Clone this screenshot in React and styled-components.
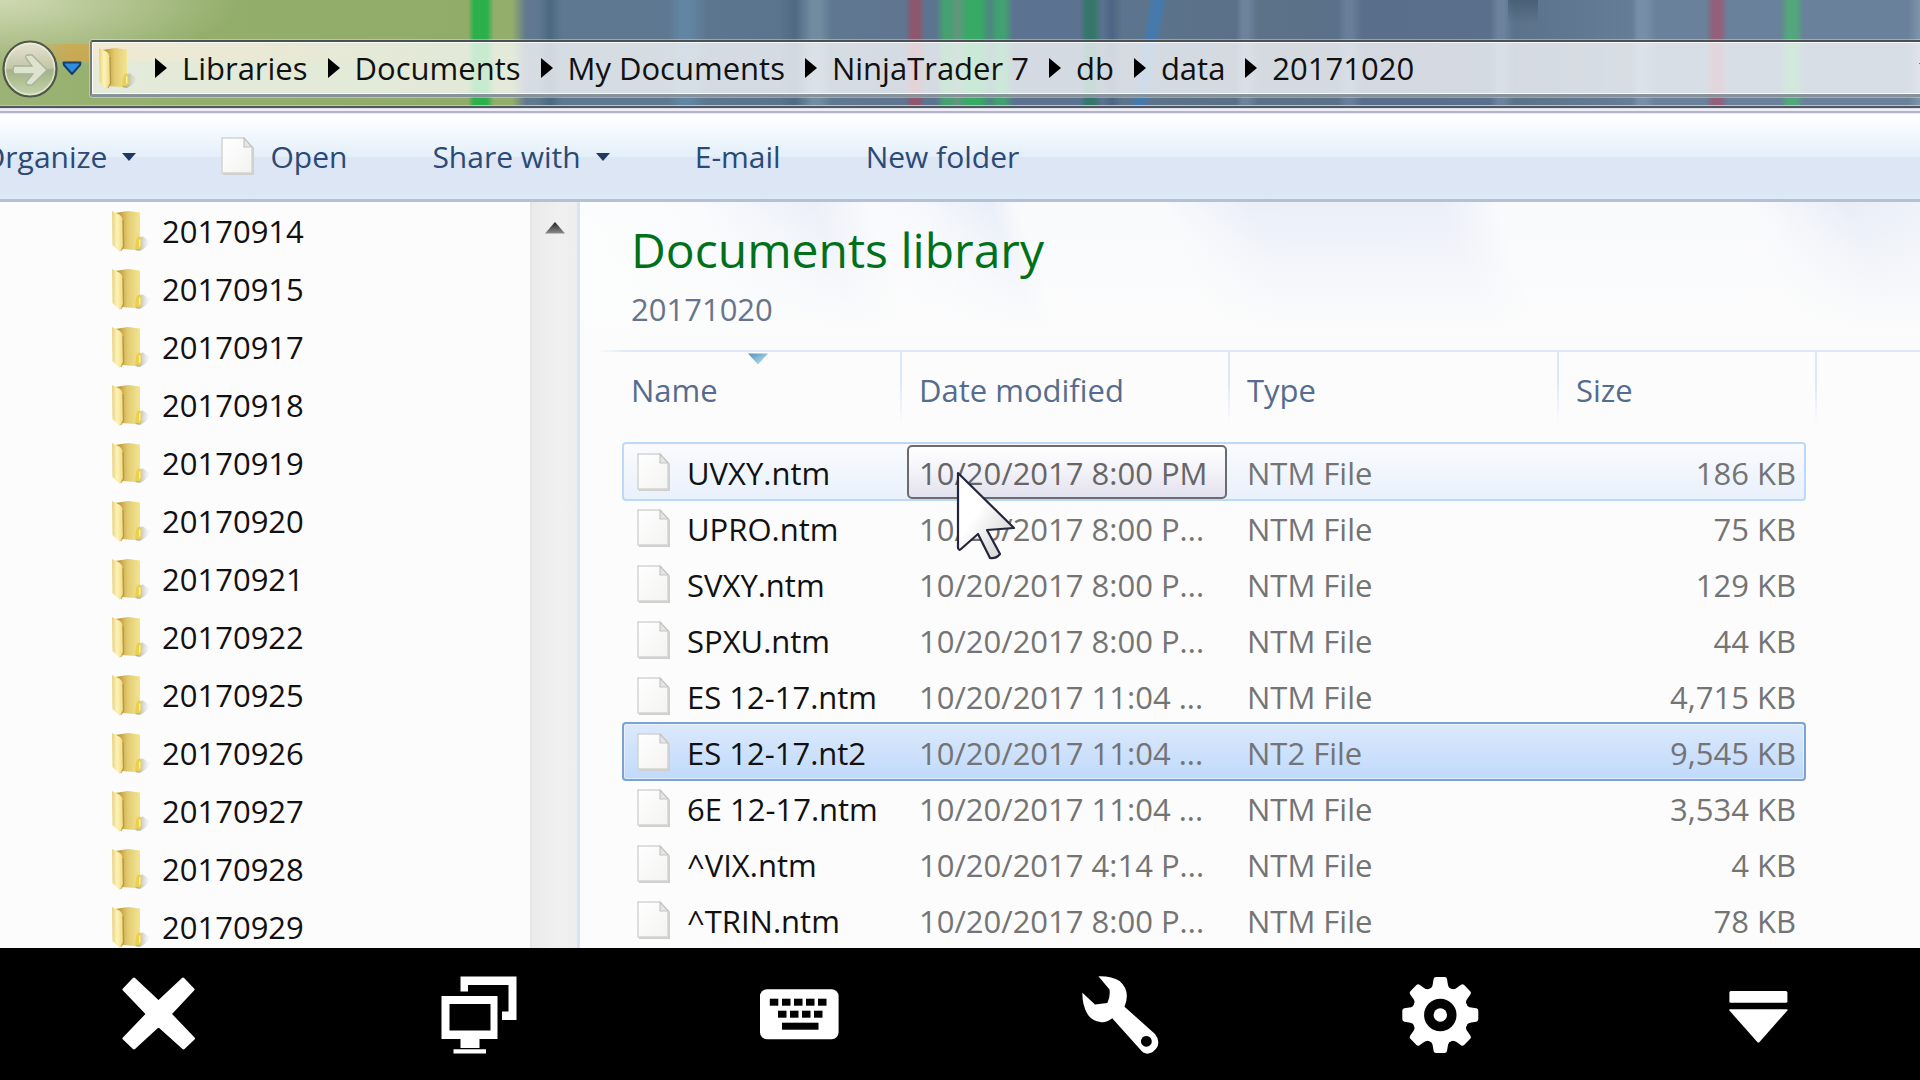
import React from "react";
import styled, { createGlobalStyle } from "styled-components";

const GlobalStyle = createGlobalStyle`
  * { box-sizing: border-box; }
  body { margin: 0; background: #000; }
  button, a { font: inherit; color: inherit; text-decoration: none; }
  button { border: 0; padding: 0; background: none; cursor: default; }
  ul, ol { list-style: none; margin: 0; padding: 0; }
  svg { display: block; flex: none; }
`;

const Screen = styled.div`
  height: 100vh;
  display: flex;
  flex-direction: column;
  overflow: hidden;
  font-family: "Open Sans", "Noto Sans", sans-serif;
  font-size: 31px;
  line-height: 44px;
  white-space: nowrap;
  color: #111;
`;

/* Title bar */

const TitleBar = styled.header`
  flex: none;
  display: flex;
  align-items: center;
  height: 105px;
  padding: 40px 0 8px 2px;
  background:
    linear-gradient(90deg, transparent 30px, rgba(214, 165, 70, 0.75) 70px, rgba(214, 165, 70, 0.5) 180px, transparent 440px) 0 44px / 440px 18px no-repeat,
    radial-gradient(ellipse 240px 70px at 0 0, rgba(225, 229, 200, 0.75), transparent) no-repeat,
    linear-gradient(rgba(60, 85, 105, 0.6), transparent) 1508px 0 / 30px 24px no-repeat,
    linear-gradient(100deg, transparent 38%, rgba(62, 124, 182, 0.75) 46% 56%, transparent 64%) 1120px 0 / 56px 105px no-repeat,
    linear-gradient(90deg,
      #9bb374 0, #93ae6b 200px, #91ab68 468px, #2bb04c 474px 487px, #93ae6b 494px 512px,
      #61788f 526px, #5f7891 538px, #4b6881 550px, #5f7891 562px, #5f7891 668px,
      #6185a3 680px 690px, #5d7690 706px, #5b748e 780px, #506a84 795px, #718ba1 812px 820px,
      #5f7891 832px, #5f7590 905px, #8f566d 912px 918px, #5b7590 926px, #5b7590 936px,
      #46a071 944px 950px, #659480 957px, #37aa65 968px 980px, #4e8580 990px, #40a270 998px 1004px,
      #5b7290 1014px, #5b7290 1080px, #35776a 1086px 1094px, #5b7290 1102px, #4d6584 1112px,
      #5d748d 1122px, #5a7089 1236px, #6c839b 1242px 1248px, #5b7287 1258px, #5a718a 1338px,
      #687f9a 1346px 1352px, #586e8b 1362px, #596f8b 1490px, #6c839d 1498px 1504px, #5b728b 1514px,
      #657d96 1632px, #768ea8 1638px 1646px, #69819a 1656px, #69819a 1706px, #935f7b 1713px 1720px,
      #69819a 1728px, #69819a 1780px, #52a77c 1788px 1796px, #69819a 1804px, #69819a 1908px, #7e95ab 1920px);
`;

const ForwardButton = styled.button`
  width: 56px;
  height: 58px;
  margin-right: 4px;
`;

const HistoryButton = styled.button`
  margin-right: 8px;
`;

const AddressBar = styled.nav`
  flex: 1;
  display: flex;
  align-items: center;
  height: 57px;
  padding-left: 6px;
  border: 2px solid #4b5052;
  border-bottom: 3px solid #87929a;
  border-right: 0;
  border-left-color: #777d70;
  border-radius: 3px 0 0 3px;
  background: rgba(255, 255, 255, 0.74);
  box-shadow: inset 1px 1px 0 rgba(255, 255, 255, 0.8), inset 0 -1px 0 rgba(255, 255, 255, 0.8), 0 0 0 1px rgba(255, 255, 255, 0.35);
  overflow: hidden;
`;

const Crumbs = styled.ol`
  flex: 1;
  display: flex;
  padding-left: 18px;
`;

const Crumb = styled.li`
  display: flex;
  align-items: center;
  gap: 15px;
  margin-right: 20px;
`;

const CrumbArrow = styled.span`
  border: 10px solid transparent;
  border-left: 12px solid #000;
  border-right: 0;
`;

const AddressToggle = styled.button`
  margin-right: -16px;
`;

const FrameEdge = styled.div`
  flex: none;
  height: 9px;
  background: linear-gradient(#b9c4c4 0 1px, #50575f 1px 3px, #dcdfe9 3px 4px, #efeef7 4px 6px, #b3b3ce 6px 8px, #e7ebf5 8px 9px);
`;

/* Command bar */

const CommandBar = styled.div`
  flex: none;
  display: flex;
  align-items: center;
  gap: 85px;
  height: 88px;
  border-bottom: 3px solid #b3c1d6;
  background: linear-gradient(#fff 0, #f2f8fd 20px, #e4effa 43px, #dce6f4 43px, #dce7f5 80px, #dfe9f6 100%);
  font-size: 30px;
  color: #2b4a76;
`;

const Command = styled.button`
  display: flex;
  align-items: center;
  gap: 15px;
  margin-left: ${(p) => (p.$cut ? "-18px" : "0")};
`;

const Caret = styled.span`
  border: 7px solid transparent;
  border-top: 8px solid #1e3a63;
  border-bottom: 0;
`;

/* Panes */

const Panes = styled.div`
  flex: 1;
  min-height: 0;
  display: flex;
  background: #fcfcfc;
`;

const Sidebar = styled.aside`
  flex: none;
  width: 580px;
  display: flex;
  border-right: 3px solid #d5e5f5;
  overflow: hidden;
`;

const FolderTree = styled.ul`
  flex: 1;
`;

const FolderLink = styled.a`
  display: flex;
  align-items: center;
  gap: 12px;
  height: 58px;
  padding-left: 111px;
`;

const ScrollTrack = styled.div`
  flex: none;
  width: 47px;
  border-left: 2px solid #e6e6e6;
  background: linear-gradient(90deg, #ebebeb, #f0f0f0 60%, #eeeeee);
`;

const ScrollUp = styled.button`
  display: flex;
  justify-content: center;
  width: 100%;
  padding-top: 20px;
`;

const Main = styled.main`
  flex: 1;
  min-width: 0;
  overflow: hidden;
`;

const LibraryHeader = styled.div`
  height: 148px;
  padding: 14px 0 0 51px;
  background:
    linear-gradient(rgba(252, 252, 252, 0), #fcfcfc 90%),
    linear-gradient(70deg, #fcfdfd 0, #f9fbfd 160px, #ebf0f8 270px, #f9fafc 320px, #f6f8fc 370px, #e9eff8 435px, #f9fafc 460px, #f8fafc 600px, #eaeff8 680px, #ebeff8 860px, #f8fafc 910px, #f9fafc 1150px, #e9eef7 1240px, #eef2f9 100%);
`;

const LibraryTitle = styled.h1`
  margin: 0 0 3px;
  font-size: 48px;
  line-height: 68px;
  font-weight: 400;
  color: #00701a;
`;

const LibraryPath = styled.p`
  margin: 0;
  color: #68748c;
`;

const FileTable = styled.table`
  display: block;
`;

const Head = styled.thead`
  display: block;
  padding: 0 0 14px 42px;
  border-top: 2px solid #dde9f6;
  border-image: linear-gradient(90deg, transparent 16px, #dde9f6 50px) 1;
`;

const Body = styled.tbody`
  display: block;
  padding-left: 42px;
`;

const HeadRow = styled.tr`
  display: grid;
  grid-template-columns: 280px 328px 329px 258px;
`;

const HeadCell = styled.th`
  position: relative;
  height: 76px;
  padding: 0 0 0 ${(p) => (p.$first ? "9px" : "17px")};
  line-height: 76px;
  text-align: left;
  font-weight: 400;
  color: #566c8e;
  background: linear-gradient(#dce8f6, #dce8f6 40%, transparent 95%) right / 2px 100% no-repeat;
`;

const SortMark = styled.svg`
  position: absolute;
  top: 1px;
  left: calc(50% - 14px);
`;

const rowLook = {
  hover: "border-color: #bcd9f8; background: linear-gradient(#fafbfd, #e9f1fc);",
  selected: "border-color: #7da2ce; background: linear-gradient(#dce9fb, #c0dafb); box-shadow: inset 0 0 0 1px rgba(255,255,255,0.45);",
};

const Row = styled.tr`
  display: grid;
  grid-template-columns: 277px 328px 329px 1fr;
  width: 1184px;
  height: 59px;
  margin-bottom: -3px;
  border: 2px solid transparent;
  border-radius: 4px;
  ${(p) => rowLook[p.$look] || ""}
`;

const Cell = styled.td`
  display: flex;
  align-items: center;
  padding: 2px 0 0 18px;
  color: #747474;
`;

const NameCell = styled(Cell)`
  gap: 16px;
  padding-left: 13px;
  color: #111;
`;

const SizeCell = styled(Cell)`
  justify-content: flex-end;
  padding: 2px 8px 0 0;
`;

const TipCell = styled(Cell)`
  position: relative;
  padding: 0 2px 0 6px;
`;

const DateTip = styled.span`
  flex: 1;
  display: flex;
  align-items: center;
  height: 54px;
  padding: 2px 0 0 10px;
  border: 2px solid #6c6c6e;
  border-radius: 5px;
  background: linear-gradient(#fff, #f3f2f8 50%, #e2e1ee);
  color: #666;
`;

const Pointer = styled.svg`
  position: absolute;
  z-index: 1;
  top: 25px;
  left: 54px;
`;

/* Remote-session bar */

const SessionBar = styled.footer`
  flex: none;
  display: grid;
  grid-template-columns: repeat(6, 1fr);
  height: 132px;
  background: #000;
`;

const SessionButton = styled.button`
  display: flex;
  align-items: center;
  justify-content: center;
`;

function FolderIcon() {
  return (
    <svg width="39" height="43" viewBox="0 0 39 43" aria-hidden="true">
      <defs>
        <linearGradient id="folderBack" x1="0" x2="1">
          <stop offset="0.2" stopColor="#c4a040" />
          <stop offset="0.5" stopColor="#e2ca70" />
          <stop offset="1" stopColor="#f3e592" />
        </linearGradient>
        <linearGradient id="folderFront" x1="0" x2="1">
          <stop offset="0" stopColor="#e9d07c" />
          <stop offset="0.45" stopColor="#fdf3b8" />
          <stop offset="1" stopColor="#f0dc86" />
        </linearGradient>
        <linearGradient id="folderShade" x1="0" x2="1">
          <stop offset="0" stopColor="#77776c" stopOpacity="0.8" />
          <stop offset="1" stopColor="#b5b5b0" stopOpacity="0" />
        </linearGradient>
      </defs>
      <path d="M24 40 L31 26 L39 31 Q37 37 29 41 Z" fill="url(#folderShade)" />
      <path d="M4 3 L17 1 L29 2.500 V37 L24 40 L10 39 Z" fill="url(#folderBack)" />
      <path d="M25 31 Q26 25 30 27 L31 36 Q30 40 24 39 Z" fill="#ead04e" />
      <path d="M28 30 L29.500 29 V36 L28 37 Z" fill="#f8efa6" />
      <path d="M1 1 L9 5 Q11.500 7 11.500 10 L12 37 L9 42 L1.500 35 Z" fill="url(#folderFront)" />
      <path d="M12 10 L12.500 36 L10 41" fill="none" stroke="#a5873a" strokeOpacity="0.6" strokeWidth="1.400" />
    </svg>
  );
}

function PageIcon() {
  return (
    <svg width="34" height="39" viewBox="0 0 34 39" aria-hidden="true">
      <defs>
        <linearGradient id="page" x1="0" y1="0" x2="1" y2="1">
          <stop offset="0" stopColor="#fff" />
          <stop offset="1" stopColor="#f3f3f2" />
        </linearGradient>
      </defs>
      <path d="M2 2 H24 L33 11 V38 H2 Z" fill="#cfcfcd" />
      <path d="M1 1 H23 L31 10 V36 H1 Z" fill="url(#page)" stroke="#d3d3d1" strokeWidth="1.500" />
      <path d="M23 1 V10 H31 Z" fill="#e6e6e4" stroke="#c4c4c2" strokeWidth="1.200" />
    </svg>
  );
}

const glyphs = {
  Close: (
    <path d="M13 4 L37.500 27 L62 4 L72 14.500 L49 39 L72.500 63.500 L62.500 73 L37.500 50.500 L13 73 L3 63.500 L26.500 39 L3 14.500 Z" strokeWidth="3" strokeLinejoin="round" />
  ),
  Monitors: (
    <g stroke="none">
      <path d="M19.500 1.500 H75.500 V45 H61 V36.500 H67.500 V10 H27 V16.500 H19.500 Z" />
      <path fillRule="evenodd" d="M0.500 21 H56.500 V64 H38.500 V73 H19.500 V64 H0.500 Z M8.500 29 V55.500 H49.500 V29 Z" />
      <path d="M12.500 74.300 H45 V78.500 H12.500 Z" />
    </g>
  ),
  Keyboard: (
    <g stroke="none">
      <rect x="-1" y="14.300" width="78.600" height="50" rx="7" />
      <g fill="#000">
        {[8.800, 21, 33, 45, 57].map((x) => <rect key={x} x={x} y="23.700" width="8.500" height="7" />)}
        {[17, 29, 41, 53].map((x) => <rect key={x} x={x} y="35.700" width="8.500" height="7" />)}
        <rect x="21" y="47.700" width="36.500" height="7" />
      </g>
    </g>
  ),
  Tools: (
    <path fillRule="evenodd" stroke="none" d="M17.400 1.300 Q31 1 38.600 6 Q50 16 43.500 31.700 L74 59 Q79 65 76.500 71.500 Q73 78 66.300 78.700 Q62 78.500 59 74.300 L31.200 43.300 Q25 48 19.400 47 Q10 45.500 6 38.300 Q1 29 1.400 17.700 L14 29.600 L26.300 28 Q29.500 22 28.500 14.500 Z M65.300 61 A5.400 5.400 0 1 0 65.400 61 Z" />
  ),
  Settings: (
    <g stroke="none">
      <circle cx="39.300" cy="40" r="28.500" />
      {[0, 45, 90, 135, 180, 225, 270, 315].map((a) => (
        <path key={a} transform={`rotate(${a} 39.300 40)`} d="M27 15 Q31.500 13 31.800 9 L32.600 4 Q33 2 35 2 H43.600 Q45.600 2 46 4 L46.800 9 Q47.100 13 51.600 15 Z" />
      ))}
      <circle cx="39.300" cy="40" r="16.200" fill="#000" />
      <circle cx="39.300" cy="40" r="6.700" />
    </g>
  ),
  Hide: (
    <g stroke="none">
      <rect x="8.400" y="16" width="58" height="11.800" rx="1.500" />
      <path d="M8.400 34.300 H66.400 V35.500 L38.500 67 Q37.400 68 36.300 67 L8.400 35.500 Z" />
    </g>
  ),
};

const crumbs = ["Libraries", "Documents", "My Documents", "NinjaTrader 7", "db", "data", "20171020"];
const folders = ["20170914", "20170915", "20170917", "20170918", "20170919", "20170920", "20170921", "20170922", "20170925", "20170926", "20170927", "20170928", "20170929"];
const files = [
  ["UVXY.ntm", "10/20/2017 8:00 PM", "NTM File", "186 KB", "hover"],
  ["UPRO.ntm", "10/20/2017 8:00 P...", "NTM File", "75 KB"],
  ["SVXY.ntm", "10/20/2017 8:00 P...", "NTM File", "129 KB"],
  ["SPXU.ntm", "10/20/2017 8:00 P...", "NTM File", "44 KB"],
  ["ES 12-17.ntm", "10/20/2017 11:04 ...", "NTM File", "4,715 KB"],
  ["ES 12-17.nt2", "10/20/2017 11:04 ...", "NT2 File", "9,545 KB", "selected"],
  ["6E 12-17.ntm", "10/20/2017 11:04 ...", "NTM File", "3,534 KB"],
  ["^VIX.ntm", "10/20/2017 4:14 P...", "NTM File", "4 KB"],
  ["^TRIN.ntm", "10/20/2017 8:00 P...", "NTM File", "78 KB"],
];

export default function App() {
  return (
    <Screen>
      <GlobalStyle />
      <TitleBar>
        <ForwardButton aria-label="Forward">
          <svg width="56" height="58" viewBox="0 0 56 58">
            <defs>
              <linearGradient id="orb" x1="0" y1="0" x2="0" y2="1">
                <stop offset="0" stopColor="#e9e3d3" />
                <stop offset="0.48" stopColor="#c3c7a8" />
                <stop offset="0.52" stopColor="#a3b387" />
                <stop offset="1" stopColor="#c6d4ac" />
              </linearGradient>
            </defs>
            <ellipse cx="28" cy="29" rx="26.500" ry="27.500" fill="url(#orb)" stroke="#50574a" strokeWidth="2.200" />
            <ellipse cx="28" cy="29" rx="24.500" ry="25.500" fill="none" stroke="#eef2e2" strokeOpacity="0.7" strokeWidth="1.500" />
            <path d="M12 26 H30 L24 18 Q23 15 26 15 H30 L45 30 L30 45 H26 Q23 44 25 41 L31 34 H12 Q10 30 12 26 Z" fill="#dde3cf" stroke="#a9b294" strokeWidth="1.300" />
          </svg>
        </ForwardButton>
        <HistoryButton aria-label="Recent pages">
          <svg width="20" height="15" viewBox="0 0 20 15">
            <path d="M1.500 1.500 H18.500 L18 4 L10 13 L2 4 Z" fill="#2f8fdc" stroke="#153f6e" strokeWidth="2" strokeLinejoin="round" />
          </svg>
        </HistoryButton>
        <AddressBar aria-label="Address">
          <FolderIcon />
          <Crumbs>
            {crumbs.map((name) => (
              <Crumb key={name}>
                <CrumbArrow />
                <a href="#folder">{name}</a>
              </Crumb>
            ))}
          </Crumbs>
          <AddressToggle aria-label="Previous locations">
            <svg width="18" height="14" viewBox="0 0 18 14"><path d="M1 2 H17 L9 11 Z" fill="#1c2b6b" /></svg>
          </AddressToggle>
        </AddressBar>
      </TitleBar>
      <FrameEdge />
      <CommandBar role="toolbar">
        <Command $cut>Organize<Caret /></Command>
        <Command><PageIcon />Open</Command>
        <Command>Share with<Caret /></Command>
        <Command>E-mail</Command>
        <Command>New folder</Command>
      </CommandBar>
      <Panes>
        <Sidebar>
          <FolderTree>
            {folders.map((name) => (
              <li key={name}>
                <FolderLink href="#folder"><FolderIcon />{name}</FolderLink>
              </li>
            ))}
          </FolderTree>
          <ScrollTrack>
            <ScrollUp aria-label="Scroll up">
              <svg width="20" height="12" viewBox="0 0 20 12">
                <defs>
                  <linearGradient id="scrollArrow" x1="0" y1="0" x2="0" y2="1">
                    <stop offset="0" stopColor="#222" />
                    <stop offset="1" stopColor="#8c8c8c" />
                  </linearGradient>
                </defs>
                <path d="M10 0 L20 11.500 H0 Z" fill="url(#scrollArrow)" />
              </svg>
            </ScrollUp>
          </ScrollTrack>
        </Sidebar>
        <Main>
          <LibraryHeader>
            <LibraryTitle>Documents library</LibraryTitle>
            <LibraryPath>20171020</LibraryPath>
          </LibraryHeader>
          <FileTable>
            <Head>
              <HeadRow>
                <HeadCell $first>
                  Name
                  <SortMark width="20" height="12" viewBox="0 0 20 12">
                    <defs>
                      <linearGradient id="sort" x1="0" y1="0" x2="1" y2="1">
                        <stop offset="0" stopColor="#4f8fb4" />
                        <stop offset="1" stopColor="#c9ecfb" />
                      </linearGradient>
                    </defs>
                    <path d="M0 0.500 H20 L10 11.500 Z" fill="url(#sort)" />
                  </SortMark>
                </HeadCell>
                <HeadCell>Date modified</HeadCell>
                <HeadCell>Type</HeadCell>
                <HeadCell>Size</HeadCell>
              </HeadRow>
            </Head>
            <Body>
              {files.map(([name, date, type, size, look]) => (
                <Row key={name} $look={look}>
                  <NameCell><PageIcon />{name}</NameCell>
                  {look === "hover" ? (
                    <TipCell>
                      <DateTip>{date}</DateTip>
                      <Pointer width="64" height="92" viewBox="-3 -3 64 92" aria-hidden="true">
                        <defs>
                          <linearGradient id="pointer" x1="0" y1="0" x2="1" y2="1">
                            <stop offset="0.4" stopColor="#fff" />
                            <stop offset="1" stopColor="#c9c9cc" />
                          </linearGradient>
                        </defs>
                        <path d="M0 1 L56 56 L29 58 L42 82 Q38 87 32 86 L20 62 L3 77 Q1 79 0 76 Z" fill="url(#pointer)" stroke="#23263c" strokeWidth="2.200" strokeLinejoin="round" />
                      </Pointer>
                    </TipCell>
                  ) : (
                    <Cell>{date}</Cell>
                  )}
                  <Cell>{type}</Cell>
                  <SizeCell>{size}</SizeCell>
                </Row>
              ))}
            </Body>
          </FileTable>
        </Main>
      </Panes>
      <SessionBar>
        {Object.entries(glyphs).map(([label, glyph]) => (
          <SessionButton key={label} aria-label={label}>
            <svg width="80" height="80" viewBox="-1 -1 80 80" fill="#fff" stroke="#fff">{glyph}</svg>
          </SessionButton>
        ))}
      </SessionBar>
    </Screen>
  );
}
